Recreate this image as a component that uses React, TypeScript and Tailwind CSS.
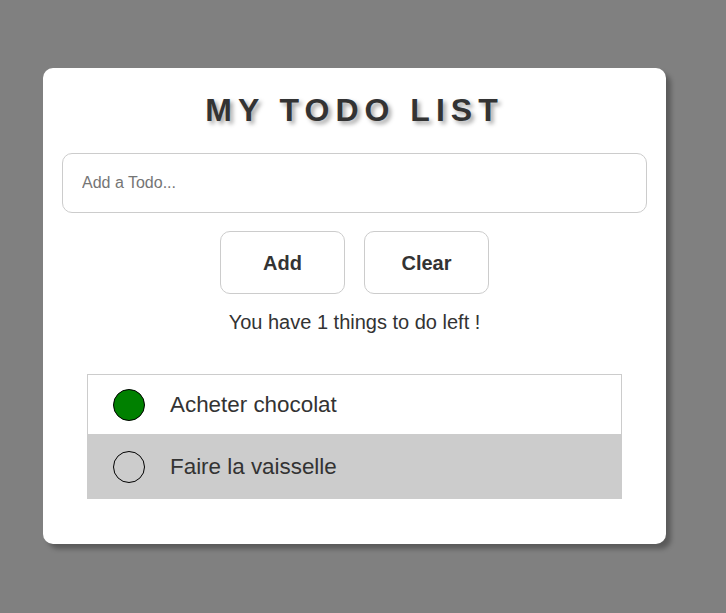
import { useState } from "react";

type Todo = { text: string; done: boolean };

export default function App() {
  const [todos, setTodos] = useState<Todo[]>([
    { text: "Acheter chocolat", done: true },
    { text: "Faire la vaisselle", done: false },
  ]);
  const [value, setValue] = useState("");

  const left = todos.filter((t) => t.done).length;

  return (
    <div className="min-h-[613px] bg-[#808080] pt-[68px] font-['Liberation_Sans',Arial,sans-serif] text-[#333]">
      <div className="ml-[43px] w-[623px] h-[476px] bg-white rounded-[10px] shadow-[5px_5px_5px_rgba(0,0,0,0.3)] px-[19px] pt-[24px]">
        <h1 className="text-center text-[32px] font-bold tracking-[6px] leading-[36px] [text-shadow:3px_3px_4px_rgba(0,0,0,0.35)]">
          MY TODO LIST
        </h1>
        <input
          value={value}
          onChange={(e) => setValue(e.target.value)}
          placeholder="Add a Todo..."
          className="mt-[25px] block w-full h-[60px] border border-[#ccc] rounded-[10px] px-[19px] text-[16px] placeholder:text-[#757575] outline-none"
        />
        <div className="mt-[18px] flex justify-center gap-[19px]">
          <button
            onClick={() => {
              if (value.trim()) {
                setTodos([...todos, { text: value.trim(), done: false }]);
                setValue("");
              }
            }}
            className="w-[125px] h-[63px] border border-[#ccc] rounded-[10px] bg-white text-[20px] font-bold"
          >
            Add
          </button>
          <button
            onClick={() => setTodos([])}
            className="w-[125px] h-[63px] border border-[#ccc] rounded-[10px] bg-white text-[20px] font-bold"
          >
            Clear
          </button>
        </div>
        <p className="mt-[16px] text-center text-[20px] leading-[24px]">
          You have {left} things to do left !
        </p>
        <ul className="mt-[40px] mx-[25px]">
          {todos.map((t, i) => (
            <li
              key={i}
              onClick={() =>
                setTodos(todos.map((x, j) => (j === i ? { ...x, done: !x.done } : x)))
              }
              className={
                i % 2 === 0
                  ? "flex items-center h-[61px] border border-[#ccc] bg-white pl-[25px] cursor-pointer"
                  : "flex items-center h-[64px] bg-[#ccc] pl-[26px] cursor-pointer"
              }
            >
              <span
                className={
                  t.done
                    ? "w-[32px] h-[32px] rounded-full border border-black bg-[#008000] shrink-0"
                    : "w-[32px] h-[32px] rounded-full border border-black shrink-0"
                }
              />
              <span className="ml-[25px] text-[22.4px]">{t.text}</span>
            </li>
          ))}
        </ul>
      </div>
    </div>
  );
}
